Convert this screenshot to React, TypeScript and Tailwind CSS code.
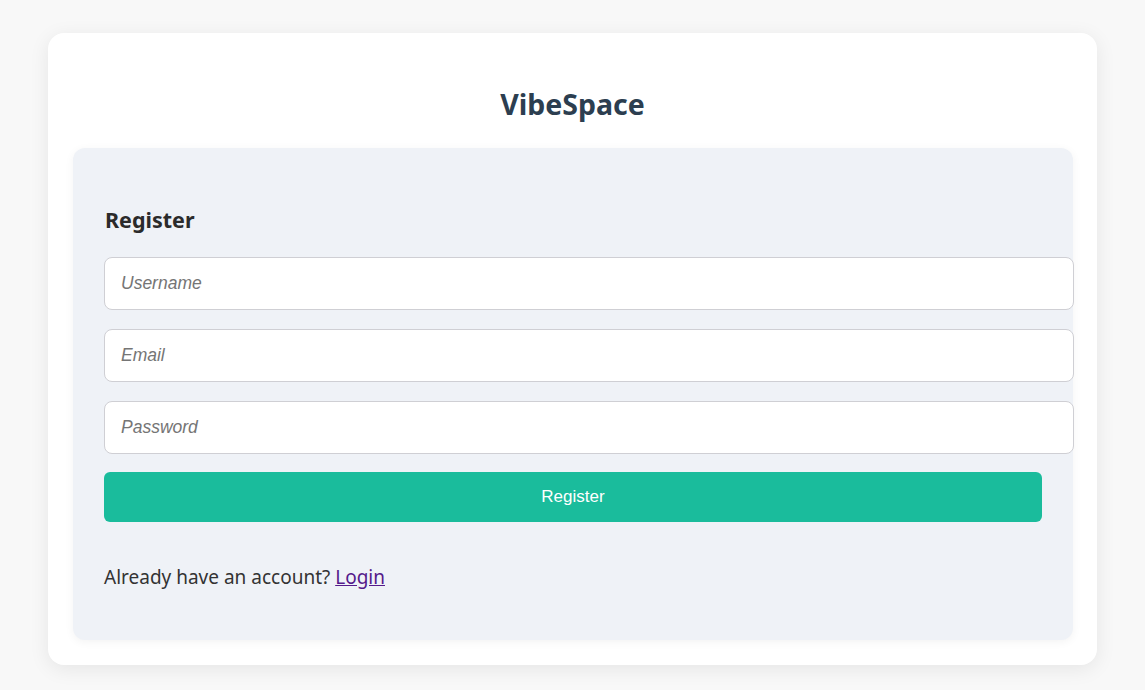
export default function App() {
  return (
    <div className="min-h-[690px] bg-[#f8f8f8] pt-[33px] px-[48px] pb-[26px] font-['Noto_Sans',sans-serif]">
      <div className="w-[1049px] rounded-[16px] bg-white px-[25px] pb-[25px] shadow-[0_4px_20px_rgba(0,0,0,0.08)]">
        <h1 className="pt-[50px] pb-[23px] text-center text-[28.5px] font-bold leading-[42px] text-[#2c3e50]">
          VibeSpace
        </h1>
        <div className="w-[1000px] rounded-[12px] bg-[#eff2f7] px-[31px] pt-[56px] pb-[48px] shadow-[0_2px_10px_rgba(0,0,0,0.05)]">
          <h2 className="pl-[1px] text-[21.5px] font-bold leading-[32px] text-[#2b2b2b]">Register</h2>
          <div className="mt-[21px] flex flex-col gap-[19px]">
            <Field placeholder="Username" />
            <Field placeholder="Email" />
            <Field placeholder="Password" type="password" />
          </div>
          <button className="mt-[18px] h-[50px] w-[938px] rounded-[6px] bg-[#1abc9c] font-['Liberation_Sans',sans-serif] text-[17px] text-white">
            Register
          </button>
          <p className="mt-[40px] text-[19px] leading-[30px] text-[#333]">
            Already have an account?{" "}
            <a href="#" className="text-[#551a8b] underline">
              Login
            </a>
          </p>
        </div>
      </div>
    </div>
  );
}

function Field({ placeholder, type = "text" }: { placeholder: string; type?: string }) {
  return (
    <input
      type={type}
      placeholder={placeholder}
      className="h-[53px] w-[970px] rounded-[8px] border border-[#cfcfd4] bg-white px-[16px] font-['Liberation_Sans',sans-serif] text-[17.5px] text-[#333] placeholder:italic placeholder:text-[#757575] outline-none"
    />
  );
}
